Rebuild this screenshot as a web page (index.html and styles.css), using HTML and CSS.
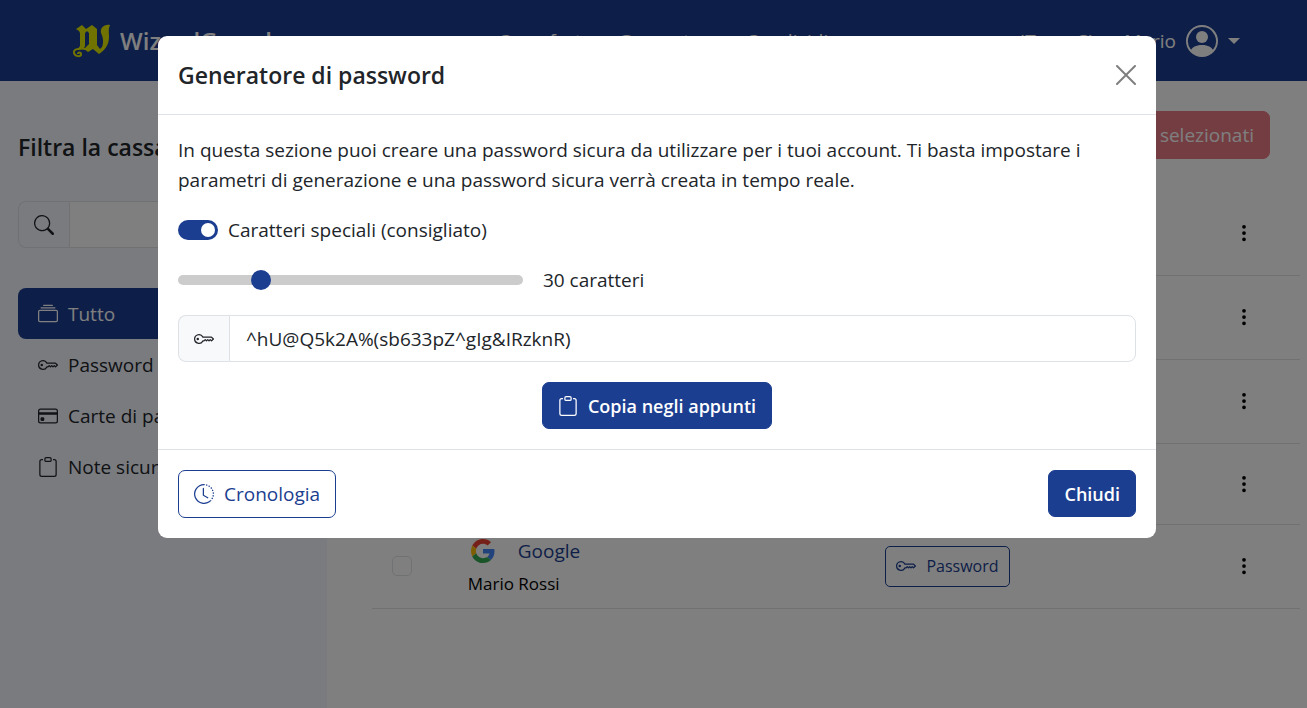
FILE: index.html
```html
<!DOCTYPE html>
<html lang="it">
<head>
<meta charset="utf-8">
<meta name="viewport" content="width=device-width, initial-scale=1">
<title>WizardGuard</title>
<link rel="stylesheet" href="styles.css">
</head>
<body>
<svg class="sprite" aria-hidden="true">
  <symbol id="key" viewBox="0 0 16 16"><path d="M0 8a4 4 0 0 1 7.465-2H14a.5.5 0 0 1 .354.146l1.5 1.5a.5.5 0 0 1 0 .708l-1.5 1.5a.5.5 0 0 1-.708 0L13 9.207l-.646.647a.5.5 0 0 1-.708 0L11 9.207l-.646.647a.5.5 0 0 1-.708 0L9 9.207l-.646.647A.5.5 0 0 1 8 10h-.535A4 4 0 0 1 0 8zm4-3a3 3 0 1 0 2.712 4.285A.5.5 0 0 1 7.163 9h.63l.853-.854a.5.5 0 0 1 .708 0l.646.647.646-.647a.5.5 0 0 1 .708 0l.646.647.646-.647a.5.5 0 0 1 .708 0l.646.647.793-.793-1-1h-6.63a.5.5 0 0 1-.451-.285A3 3 0 0 0 4 5z"/><path d="M4 8a1 1 0 1 1-2 0 1 1 0 0 1 2 0z"/></symbol>
  <symbol id="collection" viewBox="0 0 16 16"><path d="M2.5 3.5a.5.5 0 0 1 0-1h11a.5.5 0 0 1 0 1h-11zm2-2a.5.5 0 0 1 0-1h7a.5.5 0 0 1 0 1h-7zM0 13a1.5 1.5 0 0 0 1.5 1.5h13A1.5 1.5 0 0 0 16 13V6a1.5 1.5 0 0 0-1.5-1.5h-13A1.5 1.5 0 0 0 0 6v7zm1.5.5A.5.5 0 0 1 1 13V6a.5.5 0 0 1 .5-.5h13a.5.5 0 0 1 .5.5v7a.5.5 0 0 1-.5.5h-13z"/></symbol>
  <symbol id="card" viewBox="0 0 16 16"><path d="M0 4a2 2 0 0 1 2-2h12a2 2 0 0 1 2 2v8a2 2 0 0 1-2 2H2a2 2 0 0 1-2-2V4zm2-1a1 1 0 0 0-1 1v1h14V4a1 1 0 0 0-1-1H2zm13 4H1v5a1 1 0 0 0 1 1h12a1 1 0 0 0 1-1V7z"/><path d="M2 10a1 1 0 0 1 1-1h1a1 1 0 0 1 1 1v1a1 1 0 0 1-1 1H3a1 1 0 0 1-1-1v-1z"/></symbol>
  <symbol id="clipboard" viewBox="0 0 16 16"><path d="M4 1.5H3a2 2 0 0 0-2 2V14a2 2 0 0 0 2 2h10a2 2 0 0 0 2-2V3.500a2 2 0 0 0-2-2h-1v1h1a1 1 0 0 1 1 1V14a1 1 0 0 1-1 1H3a1 1 0 0 1-1-1V3.500a1 1 0 0 1 1-1h1v-1z"/><path d="M9.500 1a.5.5 0 0 1 .5.5v1a.5.5 0 0 1-.5.5h-3a.5.5 0 0 1-.5-.5v-1a.5.5 0 0 1 .5-.5h3zm-3-1A1.500 1.500 0 0 0 5 1.500v1A1.500 1.500 0 0 0 6.500 4h3A1.500 1.500 0 0 0 11 2.500v-1A1.500 1.500 0 0 0 9.500 0h-3z"/></symbol>
  <symbol id="search" viewBox="0 0 16 16"><path d="M11.742 10.344a6.500 6.500 0 1 0-1.397 1.398h-.001c.03.04.062.078.098.115l3.850 3.850a1 1 0 0 0 1.415-1.414l-3.850-3.850a1.007 1.007 0 0 0-.115-.1zM12 6.500a5.500 5.500 0 1 1-11 0 5.500 5.500 0 0 1 11 0z"/></symbol>
  <symbol id="history" viewBox="0 0 16 16"><path d="M8.515 1.019A7 7 0 0 0 8 1V0a8 8 0 0 1 .589.022l-.074.997zm2.004.45a7.003 7.003 0 0 0-.985-.299l.219-.976c.383.086.760.200 1.126.342l-.36.933zm1.370.710a7.010 7.010 0 0 0-.439-.270l.493-.870a8.025 8.025 0 0 1 .979.654l-.615.789a6.996 6.996 0 0 0-.418-.302zm1.834 1.790a6.990 6.990 0 0 0-.653-.796l.724-.690c.270.285.520.590.747.910l-.818.576zm.744 1.352a7.080 7.080 0 0 0-.214-.468l.893-.450a7.976 7.976 0 0 1 .450 1.088l-.950.313a7.023 7.023 0 0 0-.179-.483zm.530 2.507a6.991 6.991 0 0 0-.100-1.025l.985-.170c.067.386.106.778.116 1.170l-1 .025zm-.131 1.538c.033-.170.060-.339.081-.510l.993.123a7.957 7.957 0 0 1-.230 1.155l-.964-.267c.046-.165.086-.332.120-.501zm-.952 2.379c.184-.290.346-.594.486-.908l.914.405c-.160.360-.345.706-.555 1.038l-.845-.535zm-.964 1.205c.122-.122.239-.248.350-.378l.758.653a8.073 8.073 0 0 1-.401.432l-.707-.707z"/><path d="M8 1a7 7 0 1 0 4.950 11.950l.707.707A8.001 8.001 0 1 1 8 0v1z"/><path d="M7.500 3a.5.5 0 0 1 .5.5v5.210l3.248 1.856a.5.5 0 0 1-.496.868l-3.500-2A.5.5 0 0 1 7 9V3.500a.5.5 0 0 1 .5-.5z"/></symbol>
  <symbol id="person" viewBox="0 0 16 16"><path d="M11 6a3 3 0 1 1-6 0 3 3 0 0 1 6 0z"/><path fill-rule="evenodd" d="M0 8a8 8 0 1 1 16 0A8 8 0 0 1 0 8zm8-7a7 7 0 0 0-5.468 11.370C3.242 11.226 4.805 10 8 10s4.757 1.225 5.468 2.370A7 7 0 0 0 8 1z"/></symbol>
  <symbol id="dots" viewBox="0 0 16 16"><path d="M9.500 13a1.500 1.500 0 1 1-3 0 1.500 1.500 0 0 1 3 0zm0-5a1.500 1.500 0 1 1-3 0 1.500 1.500 0 0 1 3 0zm0-5a1.500 1.500 0 1 1-3 0 1.500 1.500 0 0 1 3 0z"/></symbol>
</svg>

<div class="page">
  <header class="navbar">
    <a class="brand" href="#">
      <svg class="logo" viewBox="0 0 38 34" aria-hidden="true">
        <path d="M4 5l6-4 4 4 6-4 5 4v16l3 4 2-2c2-5 1-10-1-14-1-5 3-9 9-8-2 4-1 8-1 12 0 8-4 13-10 17l-6-5-5 3-4-3 5-5V9l-2-2-2 2v13c-1 3-4 4-8 4l3-4V9l-1-2z"/>
        <path class="logo-tail" d="M14 25C7 24 1 25 2 29c1 4 8 4 7 1 0-2-3-2-3 0"/>
      </svg>
      <span>WizardGuard</span>
    </a>
    <nav class="nav-links">
      <a href="#">Cassaforte</a>
      <a href="#">Generatore</a>
      <a href="#">Condividi</a>
    </nav>
    <div class="nav-user">
      <a class="lang" href="#">IT</a>
      <button class="user" type="button">Ciao, Mario
        <svg class="avatar" aria-hidden="true"><use href="#person"/></svg>
        <span class="caret"></span>
      </button>
    </div>
  </header>
  <div class="columns">
    <aside class="sidebar">
      <h2 class="heading">Filtra la cassaforte</h2>
      <div class="field">
        <label class="addon" for="search-box"><svg class="icon" role="img" aria-label="Cerca"><use href="#search"/></svg></label>
        <input class="input" id="search-box" type="text">
      </div>
      <nav class="filters">
        <a class="filter active" href="#"><svg class="icon"><use href="#collection"/></svg>Tutto</a>
        <a class="filter" href="#"><svg class="icon"><use href="#key"/></svg>Password</a>
        <a class="filter" href="#"><svg class="icon"><use href="#card"/></svg>Carte di pagamento</a>
        <a class="filter" href="#"><svg class="icon"><use href="#clipboard"/></svg>Note sicure</a>
      </nav>
    </aside>
    <main class="main">
      <div class="toolbar"><button class="btn danger" type="button" disabled>Elimina selezionati</button></div>
      <table class="vault">
        <colgroup><col class="col-check"><col class="col-name"><col class="col-type"><col class="col-menu"></colgroup>
        <tbody>
          <tr><td></td><td></td><td></td><td><button class="menu" type="button" aria-label="Menu"><svg class="icon"><use href="#dots"/></svg></button></td></tr>
          <tr><td></td><td></td><td></td><td><button class="menu" type="button" aria-label="Menu"><svg class="icon"><use href="#dots"/></svg></button></td></tr>
          <tr><td></td><td></td><td></td><td><button class="menu" type="button" aria-label="Menu"><svg class="icon"><use href="#dots"/></svg></button></td></tr>
          <tr class="compact"><td></td><td></td><td></td><td><button class="menu" type="button" aria-label="Menu"><svg class="icon"><use href="#dots"/></svg></button></td></tr>
          <tr>
            <td><input class="check" type="checkbox" aria-label="Google"></td>
            <td>
              <a class="site" href="#">
                <svg class="google" viewBox="0 0 48 48" aria-hidden="true">
                  <path fill="#ea4335" d="M24 9.500c3.540 0 6.710 1.220 9.210 3.600l6.850-6.850C35.900 2.380 30.470 0 24 0 14.620 0 6.510 5.380 2.560 13.220l7.980 6.190C12.430 13.720 17.740 9.500 24 9.500z"/>
                  <path fill="#4285f4" d="M46.980 24.550c0-1.570-.15-3.090-.38-4.550H24v9.020h12.940c-.58 2.960-2.260 5.480-4.780 7.180l7.730 6c4.510-4.180 7.090-10.360 7.090-17.650z"/>
                  <path fill="#fbbc05" d="M10.530 28.590A14.500 14.500 0 0 1 9.770 24c0-1.600.27-3.140.76-4.590l-7.980-6.190A23.900 23.900 0 0 0 0 24c0 3.880.92 7.540 2.560 10.780l7.970-6.190z"/>
                  <path fill="#34a853" d="M24 48c6.480 0 11.930-2.130 15.890-5.810l-7.730-6c-2.150 1.450-4.920 2.300-8.160 2.300-6.260 0-11.570-4.220-13.470-9.910l-7.980 6.190C6.510 42.620 14.620 48 24 48z"/>
                </svg>Google</a>
              <div class="account">Mario Rossi</div>
            </td>
            <td><button class="btn outline small" type="button"><svg class="icon"><use href="#key"/></svg>Password</button></td>
            <td><button class="menu" type="button" aria-label="Menu"><svg class="icon"><use href="#dots"/></svg></button></td>
          </tr>
        </tbody>
      </table>
    </main>
  </div>
</div>

<div class="backdrop">
  <section class="modal" role="dialog" aria-modal="true" aria-labelledby="modal-title">
    <header class="modal-header">
      <h1 class="heading" id="modal-title">Generatore di password</h1>
      <button class="close" type="button" aria-label="Chiudi finestra"><svg class="icon" viewBox="0 0 20 20"><path d="M1 1l18 18M19 1L1 19"/></svg></button>
    </header>
    <div class="modal-body">
      <p class="intro">In questa sezione puoi creare una password sicura da utilizzare per i tuoi account. Ti basta impostare i parametri di generazione e una password sicura verrà creata in tempo reale.</p>
      <div class="option">
        <input class="switch" id="special" type="checkbox" role="switch" checked>
        <label for="special">Caratteri speciali (consigliato)</label>
      </div>
      <div class="length">
        <input class="range" id="length" type="range" min="8" max="106" value="30">
        <label for="length">30 caratteri</label>
      </div>
      <div class="field">
        <label class="addon" for="password"><svg class="icon" role="img" aria-label="Password"><use href="#key"/></svg></label>
        <input class="input" id="password" type="text" value="^hU@Q5k2A%(sb633pZ^gIg&amp;IRzknR)" readonly>
      </div>
      <button class="btn primary copy" type="button"><svg class="icon"><use href="#clipboard"/></svg>Copia negli appunti</button>
    </div>
    <footer class="modal-footer">
      <button class="btn outline" type="button"><svg class="icon"><use href="#history"/></svg>Cronologia</button>
      <button class="btn primary" type="button">Chiudi</button>
    </footer>
  </section>
</div>
</body>
</html>
```
FILE: styles.css
```css
:root {
  --primary: #1b3e90;
  --ink: #212529;
  --line: #dee2e6;
}
* { box-sizing: border-box; }
body {
  margin: 0;
  height: 100vh;
  overflow: hidden;
  color: var(--ink);
  background: #fff;
  font: 400 19px/30px "Open Sans", "Noto Sans", sans-serif;
}
button, input { font: inherit; color: inherit; }
button { cursor: pointer; }
a { color: inherit; text-decoration: none; }
.sprite { display: none; }
.icon { flex: none; display: block; width: 20px; height: 20px; fill: currentColor; }
.heading { margin: 0; font-size: 23px; line-height: 30px; font-weight: 600; }

.page { min-height: 100vh; display: flex; flex-direction: column; }
.navbar {
  display: flex;
  align-items: center;
  height: 81px;
  padding: 0 67px 0 72px;
  color: #fff;
  background: var(--primary);
}
.brand { display: flex; align-items: center; gap: 10px; width: 426px; font-size: 24px; font-weight: 600; }
.logo { width: 38px; height: 34px; fill: #e0e600; }
.logo-tail { fill: none; stroke: #e0e600; stroke-width: 2; }
.nav-links { display: flex; gap: 26px; }
.nav-user { display: flex; align-items: center; gap: 40px; margin-left: auto; }
.user { display: flex; align-items: center; gap: 10px; padding: 0; border: 0; background: none; }
.avatar { width: 32px; height: 32px; fill: currentColor; }
.caret { border: 6px solid transparent; border-top-color: currentColor; border-bottom: 0; }

.columns { flex: 1; display: flex; }
.sidebar { width: 25%; min-width: 320px; padding: 51px 18px 0; background: #f4f6ff; }
.field { display: flex; height: 47px; }
.sidebar .field { margin: 39px 0 40px; }
.addon {
  display: flex;
  align-items: center;
  padding: 0 15px;
  border: 1px solid var(--line);
  border-right: 0;
  border-radius: 8px 0 0 8px;
  background: #f8f9fa;
}
.sidebar .addon { background: none; }
.input {
  flex: 1;
  min-width: 0;
  padding: 0 16px;
  border: 1px solid var(--line);
  border-radius: 0 8px 8px 0;
  background: #fff;
}
.filter { display: flex; align-items: center; gap: 10px; height: 51px; padding: 0 20px; border-radius: 8px; white-space: nowrap; }
.filter.active { color: #fff; background: var(--primary); }

.main { flex: 1; min-width: 0; padding: 30px 7px 0 45px; }
.toolbar { display: flex; justify-content: flex-end; padding-right: 30px; margin-bottom: 32px; }
.btn {
  display: inline-flex;
  align-items: center;
  gap: 10px;
  height: 47px;
  padding: 0 15px;
  border: 1px solid var(--primary);
  border-radius: 7px;
  white-space: nowrap;
}
.btn.primary { color: #fff; background: var(--primary); font-size: 18px; font-weight: 600; }
.btn.outline { height: 48px; color: var(--primary); background: none; }
.btn.danger { height: 48px; color: #fff; background: #dc3545; border-color: #dc3545; opacity: .65; }
.btn.small { height: 41px; padding: 0 10px; border-radius: 5px; font-size: 16px; }

.vault { width: 100%; table-layout: fixed; border-collapse: collapse; color: #000; }
.col-check { width: 96px; }
.col-name { width: 45%; }
.col-menu { width: 77px; }
.vault td { height: 84px; padding: 0; border-bottom: 1px solid var(--line); }
.vault .compact td { height: 81px; }
.check { appearance: none; display: block; width: 20px; height: 20px; margin: 0 0 0 20px; border: 1px solid var(--line); border-radius: 5px; }
.site { display: flex; align-items: center; gap: 23px; padding: 2px 0 0 3px; color: var(--primary); }
.google { width: 24px; height: 24px; }
.account { margin-top: 3px; font-size: 17px; }
.menu { display: block; padding: 0; border: 0; background: none; }
.menu .icon { margin-left: 11px; }

/* Dimmed layer holding the dialog above the page */
.backdrop {
  position: fixed;
  inset: 0;
  display: flex;
  align-items: flex-start;
  justify-content: center;
  padding: 36px 0 0 7px;
  background: rgba(0, 0, 0, .5);
}
.modal { width: 998px; max-width: 96%; border-radius: 9px; background: #fff; }
.modal-header { display: flex; align-items: center; justify-content: space-between; height: 79px; padding: 0 20px; border-bottom: 1px solid var(--line); }
.close { padding: 0; border: 0; background: none; }
.close .icon { fill: none; stroke: #7f7f7f; stroke-width: 2; stroke-linecap: round; }
.modal-body { display: flex; flex-direction: column; padding: 20px; gap: 20px; }
.intro { margin: 0; }
.option { display: flex; align-items: center; gap: 10px; }
.switch { appearance: none; width: 40px; height: 20px; margin: 0; padding: 3px; border-radius: 10px; background: var(--primary); }
.switch::before { content: ""; display: block; width: 14px; height: 14px; margin-left: auto; border-radius: 50%; background: #fff; }
.length { display: flex; align-items: center; gap: 20px; }
.range { appearance: none; width: 36%; height: 20px; margin: 0; background: none; }
.range::-webkit-slider-runnable-track { height: 10px; border-radius: 5px; background: #ccc; }
.range::-webkit-slider-thumb { appearance: none; width: 20px; height: 20px; margin-top: -5px; border-radius: 50%; background: var(--primary); }
.copy { align-self: center; }
.modal-footer { display: flex; align-items: flex-start; justify-content: space-between; padding: 20px; border-top: 1px solid var(--line); }
```
